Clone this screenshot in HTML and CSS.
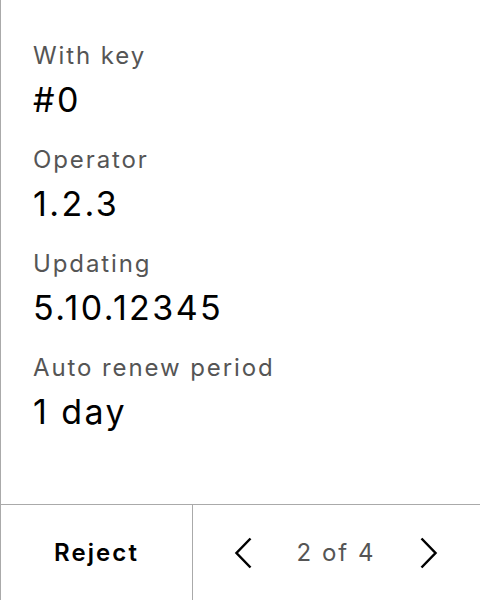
FILE: index.html
```html
<!DOCTYPE html>
<html>
<head>
<meta charset="utf-8">
<link rel="stylesheet" href="styles.css">
</head>
<body>
<div class="panel">
  <div class="details">
    <div class="field"><div class="label">With key</div><div class="value">#0</div></div>
    <div class="field"><div class="label">Operator</div><div class="value">1.2.3</div></div>
    <div class="field"><div class="label">Updating</div><div class="value">5.10.12345</div></div>
    <div class="field"><div class="label">Auto renew period</div><div class="value">1 day</div></div>
  </div>
  <div class="footer">
    <div class="reject">Reject</div>
    <div class="pager">
      <svg class="chev" width="18" height="32" viewBox="0 0 18 32"><path d="M16.5 1.5 L2.5 16 L16.5 30.5" fill="none" stroke="#000" stroke-width="2.5"/></svg>
      <span class="count">2 of 4</span>
      <svg class="chev" width="18" height="32" viewBox="0 0 18 32"><path d="M1.5 1.5 L15.5 16 L1.5 30.5" fill="none" stroke="#000" stroke-width="2.5"/></svg>
    </div>
  </div>
</div>
</body>
</html>
```
FILE: styles.css
```css
html, body { margin: 0; padding: 0; background: #fff; }
body { font-family: Inter, "Noto Sans", sans-serif; }
.panel {
  width: 480px; height: 600px; box-sizing: border-box;
  border-left: 1px solid #aaa;
  display: flex; flex-direction: column;
}
.details { flex: 1; padding: 40px 32px 0; display: flex; flex-direction: column; gap: 24px; }
.field { display: flex; flex-direction: column; gap: 8px; }
.label { font-size: 24px; line-height: 32px; color: #555; letter-spacing: 1.9px; }
.value { font-size: 34px; line-height: 40px; color: #000; letter-spacing: 2.4px; }
.footer { height: 95px; flex: none; border-top: 1px solid #aaa; display: flex; }
.reject { width: 191px; flex: none; border-right: 1px solid #aaa; display: flex; align-items: center; justify-content: center; font-size: 24px; font-weight: 600; color: #000; letter-spacing: 2.1px; }
.pager { flex: 1; display: flex; align-items: center; justify-content: space-between; padding: 0 42px 0 41px; }
.count { font-size: 24px; color: #555; letter-spacing: 2px; }
```
